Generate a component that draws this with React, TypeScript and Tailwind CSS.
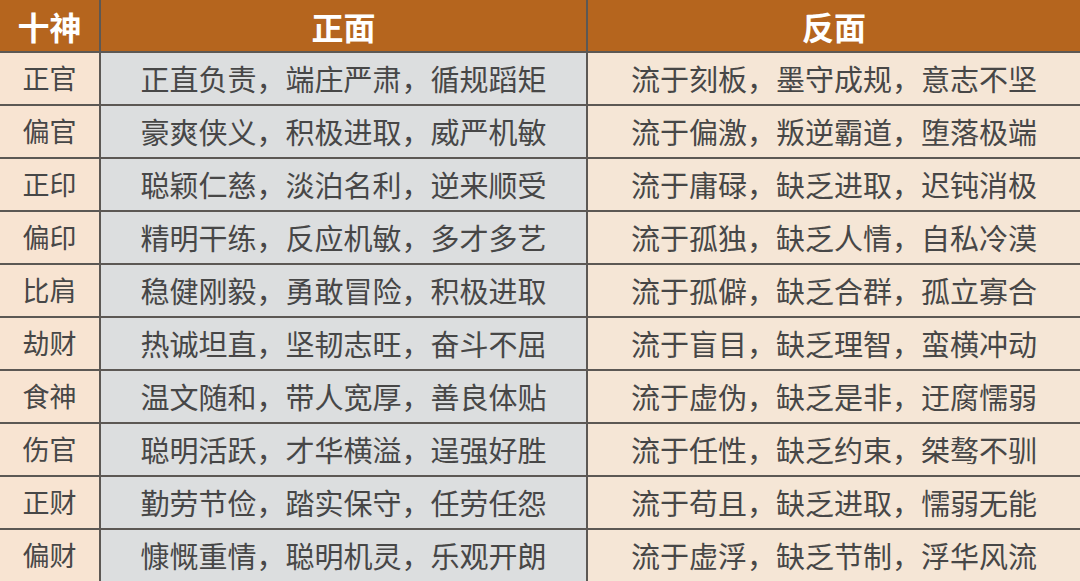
const ROWS: [string, string, string][] = [
  ['正官', '正直负责，端庄严肃，循规蹈矩', '流于刻板，墨守成规，意志不坚'],
  ['偏官', '豪爽侠义，积极进取，威严机敏', '流于偏激，叛逆霸道，堕落极端'],
  ['正印', '聪颖仁慈，淡泊名利，逆来顺受', '流于庸碌，缺乏进取，迟钝消极'],
  ['偏印', '精明干练，反应机敏，多才多艺', '流于孤独，缺乏人情，自私冷漠'],
  ['比肩', '稳健刚毅，勇敢冒险，积极进取', '流于孤僻，缺乏合群，孤立寡合'],
  ['劫财', '热诚坦直，坚韧志旺，奋斗不屈', '流于盲目，缺乏理智，蛮横冲动'],
  ['食神', '温文随和，带人宽厚，善良体贴', '流于虚伪，缺乏是非，迂腐懦弱'],
  ['伤官', '聪明活跃，才华横溢，逞强好胜', '流于任性，缺乏约束，桀骜不驯'],
  ['正财', '勤劳节俭，踏实保守，任劳任怨', '流于苟且，缺乏进取，懦弱无能'],
  ['偏财', '慷慨重情，聪明机灵，乐观开朗', '流于虚浮，缺乏节制，浮华风流'],
];

const HEAD = 'flex items-center justify-center bg-[#b5651e] text-[32px] font-bold text-white';
const CELL = 'flex items-center justify-center text-[#474747]';

export default function App() {
  return (
    <div
      className="grid h-[581px] w-[1080px] grid-cols-[99px_485px_1fr] auto-rows-[51px] gap-[2px] overflow-hidden bg-[#5c5854]"
      style={{ fontFamily: '"Noto Sans CJK SC", "Noto Sans", sans-serif' }}
    >
      <div className={HEAD}>十神</div>
      <div className={HEAD}>正面</div>
      <div className={HEAD}>反面</div>
      {ROWS.map(([name, pos, neg]) => (
        <div key={name} className="contents">
          <div className={`${CELL} bg-[#f8e4d2] text-[27px]`}>{name}</div>
          <div className={`${CELL} bg-[#dcdedf] text-[29px]`}>{pos}</div>
          <div className={`${CELL} bg-[#f5e6d6] text-[29px]`}>{neg}</div>
        </div>
      ))}
    </div>
  );
}
